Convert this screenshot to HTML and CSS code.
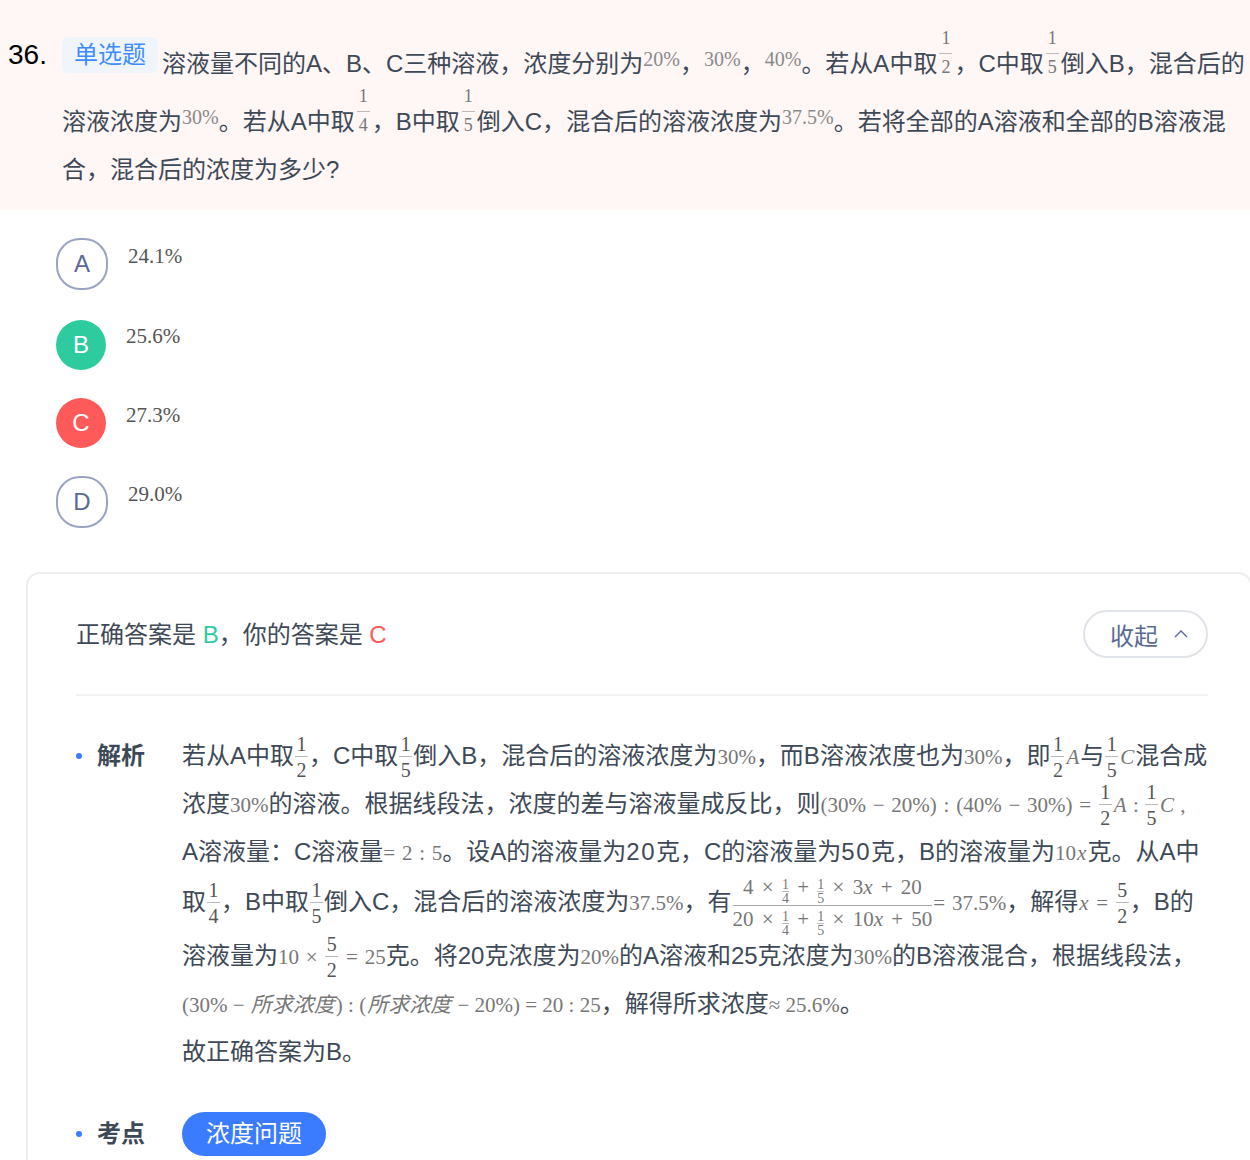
FILE: index.html
```html
<!DOCTYPE html>
<html lang="zh-CN">
<head>
    <meta charset="UTF-8" />
    <title>单选题 36</title>
    <link rel="stylesheet" href="styles.css">
</head>
<body>

<div class="question">
    <div class="q-num">36.</div>
    <div class="q-body">
        <div class="line"><span class="q-type">单选题</span>溶液量不同的A、B、C三种溶液，浓度分别为<span class="m up">20%</span>，<span class="m up">30%</span>，<span class="m up">40%</span>。若从A中取<span class="frac up-frac"><span class="num">1</span><span class="den">2</span></span>，C中取<span class="frac up-frac"><span class="num">1</span><span class="den">5</span></span>倒入B，混合后的</div>
        <div class="line second">溶液浓度为<span class="m up">30%</span>。若从A中取<span class="frac up-frac"><span class="num">1</span><span class="den">4</span></span>，B中取<span class="frac up-frac"><span class="num">1</span><span class="den">5</span></span>倒入C，混合后的溶液浓度为<span class="m up">37.5%</span>。若将全部的A溶液和全部的B溶液混</div>
        <div class="line">合，混合后的浓度为多少?</div>
    </div>
</div>

<div class="options">
    <div class="option">
        <div class="opt-key">A</div>
        <div class="opt-text">24.1%</div>
    </div>
    <div class="option">
        <div class="opt-key right">B</div>
        <div class="opt-text">25.6%</div>
    </div>
    <div class="option">
        <div class="opt-key wrong">C</div>
        <div class="opt-text">27.3%</div>
    </div>
    <div class="option">
        <div class="opt-key">D</div>
        <div class="opt-text">29.0%</div>
    </div>
</div>

<div class="card">
    <div class="card-head">
        <div class="result">正确答案是 <span class="green">B</span>，你的答案是 <span class="red">C</span></div>
        <div class="fold">收起
            <svg width="14" height="8" viewBox="0 0 14 8"><polyline points="1,7 7,1 13,7" fill="none" stroke="#5a6a96" stroke-width="1.4"/></svg>
        </div>
    </div>

    <div class="section">
        <div class="sec-title">解析</div>
        <div class="sec-body">
            <div class="line">若从A中取<span class="frac"><span class="num">1</span><span class="den">2</span></span>，C中取<span class="frac"><span class="num">1</span><span class="den">5</span></span>倒入B，混合后的溶液浓度为<span class="m">30%</span>，而B溶液浓度也为<span class="m">30%</span>，即<span class="frac"><span class="num">1</span><span class="den">2</span></span><span class="m"><i>A</i></span>与<span class="frac"><span class="num">1</span><span class="den">5</span></span><span class="m"><i>C</i></span>混合成</div>
            <div class="line">浓度<span class="m">30%</span>的溶液。根据线段法，浓度的差与溶液量成反比，则<span class="m wide">(30% − 20%) : (40% − 30%) = </span><span class="frac"><span class="num">1</span><span class="den">2</span></span><span class="m"><i>A</i> : </span><span class="frac"><span class="num">1</span><span class="den">5</span></span><span class="m"><i>C</i> ,</span></div>
            <div class="line">A溶液量：C溶液量<span class="m wide">= 2 : 5</span>。设A的溶液量为<span class="digits">20</span>克，C的溶液量为<span class="digits">50</span>克，B的溶液量为<span class="m">10<i>x</i></span>克。从A中</div>
            <div class="line tall">取<span class="frac"><span class="num">1</span><span class="den">4</span></span>，B中取<span class="frac"><span class="num">1</span><span class="den">5</span></span>倒入C，混合后的溶液浓度为<span class="m">37.5%</span>，有<span class="big-frac"><span class="big-num">4 × <span class="mini"><span>1</span><span>4</span></span> + <span class="mini"><span>1</span><span>5</span></span> × 3<i>x</i> + 20</span><span class="big-den">20 × <span class="mini"><span>1</span><span>4</span></span> + <span class="mini"><span>1</span><span>5</span></span> × 10<i>x</i> + 50</span></span><span class="m wide">= 37.5%</span>，解得<span class="m wide"><i>x</i> = </span><span class="frac"><span class="num">5</span><span class="den">2</span></span>，B的</div>
            <div class="line taller">溶液量为<span class="m wide">10 × </span><span class="frac"><span class="num">5</span><span class="den">2</span></span><span class="m wide"> = 25</span>克。将20克浓度为<span class="m">20%</span>的A溶液和25克浓度为<span class="m">30%</span>的B溶液混合，根据线段法，</div>
            <div class="line"><span class="m">(30% − <i>所求浓度</i>) : (<i>所求浓度</i> − 20%) = 20 : 25</span>，解得所求浓度<span class="m">≈ 25.6%</span>。</div>
            <div class="line">故正确答案为B。</div>
        </div>
    </div>

    <div class="section topic">
        <div class="sec-title">考点</div>
        <div class="sec-body">
            <span class="pill">浓度问题</span>
        </div>
    </div>
</div>

</body>
</html>
```

FILE: styles.css
```css
html, body {
    height: 1160px;
    overflow: hidden;
}

body {
    margin: 0;
    font-family: "Liberation Sans", "Noto Sans CJK SC", sans-serif;
    font-size: 24px;
    color: #3e4957;
    background-color: #fff;
}

.line {
    height: 48px;
    line-height: 48px;
    white-space: nowrap;
}

.digits {
    letter-spacing: 1.5px;
}

/* question */
.question {
    display: flex;
    height: 210px;
    box-sizing: border-box;
    padding: 40px 0 0 8px;
    background-color: #fff6f6;
}

.q-num {
    width: 54px;
    flex: none;
    margin-top: -9px;
    font-size: 28px;
    line-height: 48px;
    color: #000;
}

.q-type {
    display: inline-block;
    width: 96px;
    height: 36px;
    margin: -10px 4px 0 0;
    line-height: 36px;
    text-align: center;
    vertical-align: 9px;
    color: #3f8cff;
    background-color: #f0f5fb;
    border-radius: 6px;
}

.second {
    margin-top: 10px;
}

/* math */
.m {
    font-family: "Liberation Serif", "Noto Sans CJK SC", serif;
    font-size: 21px;
    line-height: 1;
    color: #777;
}

.m.wide {
    word-spacing: 1.5px;
}

.m i {
    padding: 0 1px;
}

.m.up {
    font-size: 20px;
    vertical-align: 6px;
    color: #8a8a8a;
}

.frac {
    display: inline-block;
    min-width: 13px;
    margin: -40px 1px 0;
    font-family: "Liberation Serif", serif;
    font-size: 20px;
    line-height: 20px;
    text-align: center;
    vertical-align: -13px;
    color: #555;
}

.frac.up-frac {
    margin: -40px 2px 0;
    vertical-align: -1px;
    font-size: 18px;
    color: #777;
}

.num {
    display: block;
    padding-bottom: 2px;
    border-bottom: 1px solid #bbb;
}

.up-frac .num {
    padding-bottom: 5px;
}

.den {
    display: block;
    padding-top: 3px;
}

.big-frac {
    display: inline-block;
    margin: -40px 1px 0;
    font-family: "Liberation Serif", serif;
    font-size: 21px;
    line-height: 27px;
    word-spacing: 3px;
    text-align: center;
    vertical-align: -16px;
    color: #777;
}

.big-num {
    display: block;
    border-bottom: 1px solid #aaa;
}

.big-den {
    display: block;
}

.mini {
    display: inline-block;
    font-size: 14px;
    line-height: 13px;
    vertical-align: -9px;
}

.mini span {
    display: block;
}

.mini span:first-child {
    border-bottom: 1px solid #bbb;
}

/* options */
.options {
    padding: 28px 0 0 56px;
}

.option {
    display: flex;
    gap: 20px;
    margin-bottom: 28px;
}

.option:first-child {
    margin-bottom: 30px;
}

.opt-key {
    display: flex;
    align-items: center;
    justify-content: center;
    width: 52px;
    height: 52px;
    box-sizing: border-box;
    border: 2px solid #9aa3c2;
    border-radius: 24px;
    color: #5a6a96;
}

.opt-key.right, .opt-key.wrong {
    width: 50px;
    height: 50px;
    border: none;
    border-radius: 50%;
    color: #fff;
}

.opt-key.right {
    background-color: #2ecb9f;
}

.opt-key.wrong {
    background-color: #ff5a5a;
}

.opt-text {
    font-family: "Liberation Serif", serif;
    font-size: 21px;
    line-height: 36px;
    color: #555;
}

.opt-key.right + .opt-text {
    margin-top: -2px;
}

.opt-key.wrong + .opt-text {
    margin-top: -1px;
}

/* answer card */
.card {
    box-sizing: border-box;
    height: 588px;
    margin: 44px -2px 0 26px;
    padding: 0 42px 0 48px;
    border: 2px solid #eee;
    border-bottom: none;
    border-radius: 14px 14px 0 0;
    background-color: #fff;
}

.card-head {
    display: flex;
    align-items: center;
    justify-content: space-between;
    height: 120px;
    margin-bottom: 36px;
    border-bottom: 2px solid #f2f2f2;
}

.result {
    padding-bottom: 4px;
}

.green {
    color: #2ecb9f;
}

.red {
    color: #ff5a5a;
}

.fold {
    display: flex;
    align-items: center;
    gap: 16px;
    box-sizing: border-box;
    width: 125px;
    height: 48px;
    padding-left: 25px;
    border: 2px solid #e0e3ea;
    border-radius: 24px;
    color: #5a6a96;
}

.section {
    display: flex;
}

.topic {
    margin-top: 36px;
}

.sec-title {
    position: relative;
    width: 106px;
    flex: none;
    box-sizing: border-box;
    padding-left: 21px;
    font-weight: bold;
    line-height: 48px;
}

.sec-title::before {
    content: "";
    position: absolute;
    left: 0;
    top: 21px;
    width: 6px;
    height: 6px;
    border-radius: 50%;
    background-color: #3b7cff;
}

.topic .sec-title {
    line-height: 44px;
}

.topic .sec-title::before {
    top: 19px;
}

.tall {
    margin-top: 2px;
}

.taller {
    margin-top: 6px;
}

.pill {
    display: inline-block;
    padding: 0 24px;
    height: 44px;
    line-height: 44px;
    border-radius: 22px;
    color: #fff;
    background-color: #3b7cff;
}
```
